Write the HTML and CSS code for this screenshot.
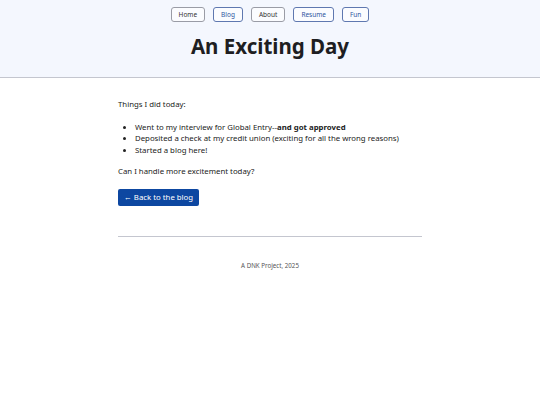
FILE: index.html
```html
<!DOCTYPE html>
<html>
<head>
<meta charset="UTF-8">
<title>An Exciting Day</title>
<link rel="stylesheet" href="styles.css">
</head>
<body>
	<header>
		<nav>
			<a href="#" class="nav-btn">Home</a>
			<a href="#" class="nav-btn blue">Blog</a>
			<a href="#" class="nav-btn">About</a>
			<a href="#" class="nav-btn blue">Resume</a>
			<a href="#" class="nav-btn blue">Fun</a>
		</nav>
		<h1>An Exciting Day</h1>
	</header>
	<main>
		<p>Things I did today:</p>
		<ul>
			<li>Went to my interview for Global Entry--<b>and got approved</b></li>
			<li>Deposited a check at my credit union (exciting for all the wrong reasons)</li>
			<li>Started a blog here!</li>
		</ul>
		<p>Can I handle more excitement today?</p>
		<a href="#" class="back">&larr; Back to the blog</a>
	</main>
	<footer>
		<p>A DNK Project, 2025</p>
	</footer>
</body>
</html>
```

FILE: styles.css
```css
*{
	margin:0;
	padding:0;
	box-sizing:border-box;
}
body{
	font-family:"Noto Sans","Open Sans",sans-serif;
	color:#222;
	background:#fff;
}
header{
	background:#f4f7fe;
	border-bottom:1px solid #c4c6cf;
	height:78px;
	padding-top:7px;
	text-align:center;
}
nav{
	display:flex;
	justify-content:center;
	gap:8px;
}
.nav-btn{
	display:block;
	height:15px;
	line-height:13px;
	padding:0 7px;
	font-size:6.5px;
	color:#333;
	text-decoration:none;
	border:1px solid #9a9ca6;
	border-radius:3px;
	background:#fbfcff;
}
.nav-btn.blue{
	color:#2f55a0;
	border-color:#5f78b0;
}
h1{
	font-size:20.5px;
	font-weight:700;
	color:#1e1e22;
	margin-top:10px;
	line-height:28px;
}
main{
	width:304px;
	margin:0 auto;
	padding-top:21px;
	font-size:7.8px;
	line-height:11.5px;
}
main p{
	margin-bottom:11px;
}
ul{
	margin-bottom:10px;
	padding-left:17px;
}
b{
	font-weight:700;
}
.back{
	display:inline-block;
	background:#0d47a1;
	color:#fff;
	text-decoration:none;
	border-radius:2px;
	height:17px;
	line-height:17px;
	padding:0 6px;
	font-size:7.8px;
}
footer{
	width:304px;
	margin:30px auto 0;
	border-top:1px solid #c4c6cf;
	text-align:center;
	padding-top:24px;
	font-size:6.2px;
	color:#555;
}
```
